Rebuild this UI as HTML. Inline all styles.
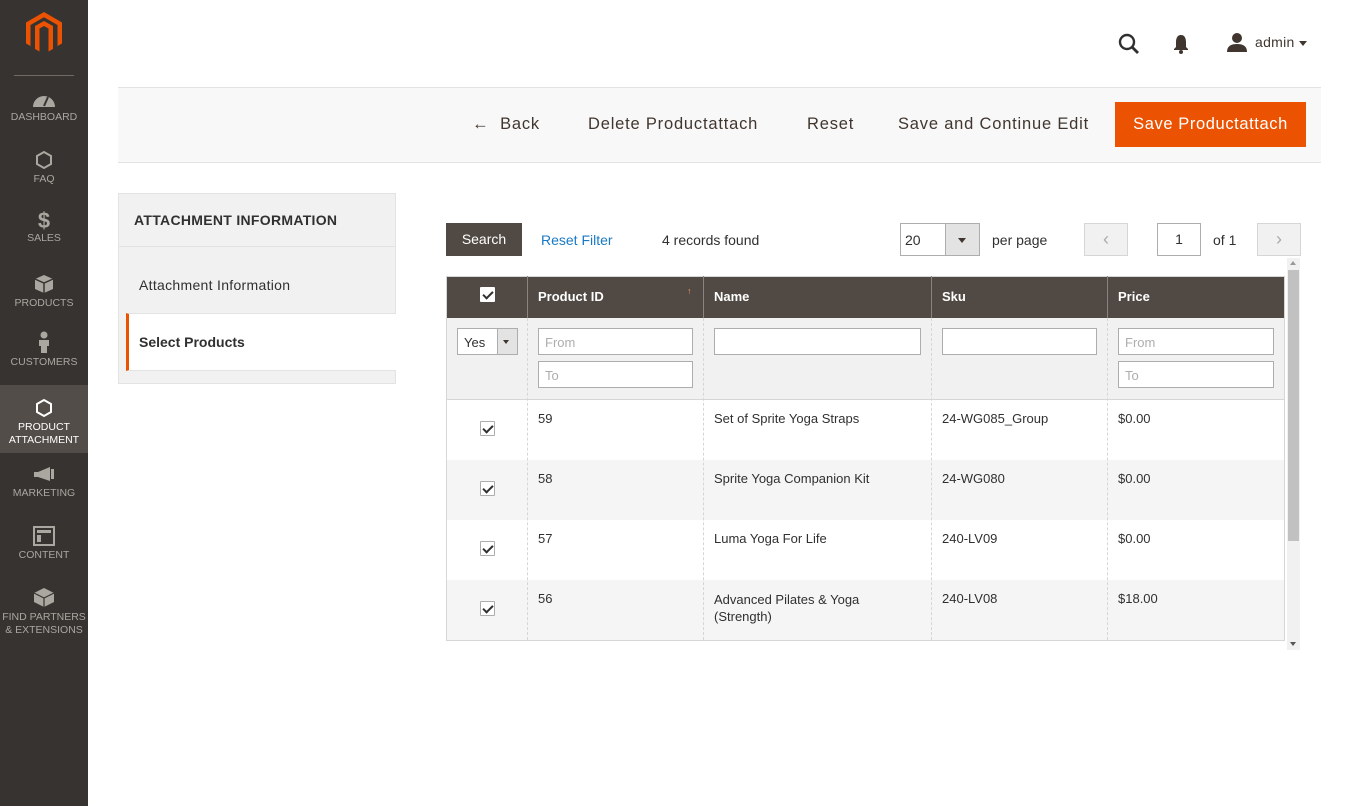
<!DOCTYPE html>
<html><head><meta charset="utf-8"><style>
*{box-sizing:border-box;margin:0;padding:0}
body{width:1350px;height:806px;position:relative;background:#fff;font-family:"Liberation Sans",sans-serif;color:#303030;overflow:hidden}
.a{position:absolute}
#sb{left:0;top:0;width:88px;height:806px;background:#373330}
.nav{position:absolute;left:0;width:88px;text-align:center;color:#aaa6a0;font-size:10.5px;line-height:13px}
.nav svg{display:block;margin:0 auto 3px}
.t{font-size:14px}
.btn{position:absolute;font-size:16.5px;color:#41362f;top:115px;letter-spacing:0.8px}
.cell{position:absolute;font-size:13px}
.inp{position:absolute;background:#fff;border:1px solid #adadad;height:27px;font-size:13px;color:#adadad;padding:6px 0 0 6px}
.vl{position:absolute;width:0;border-left:1px dashed #d6d6d6}
.cb{position:absolute;width:15px;height:15px;border:1px solid #adadad;background:#fff;border-radius:1px}
.cb:after{content:"";position:absolute;left:4px;top:1px;width:4px;height:8px;border:solid #303030;border-width:0 2px 2px 0;transform:rotate(45deg)}
</style></head><body>
<div id="sb" class="a">
<svg class="a" style="left:26px;top:12px" width="36" height="42" viewBox="0 0 36 42"><path d="M18 0L36 10.5V31.5L31.5 34V13L18 5.3 4.5 13V34L0 31.5V10.5Z" fill="#eb5202"/><path d="M18 9L27 14V37L22.5 39.5V16.5L18 14 13.5 16.5V39.5L9 37V14Z" fill="#eb5202"/></svg>
<div class="a" style="left:14px;top:75px;width:60px;height:1px;background:#736963"></div>
<div class="nav" style="top:92px"><svg width="24" height="16" viewBox="0 0 24 16"><path d="M1 15A11 11 0 0 1 23 15Z" fill="#aaa6a0"/><path d="M12 14L16 5" stroke="#373330" stroke-width="2"/></svg>DASHBOARD</div>
<div class="nav" style="top:150px"><svg width="20" height="20" viewBox="0 0 20 20"><path d="M10 2L17 6V14L10 18 3 14V6Z" fill="none" stroke="#aaa6a0" stroke-width="2"/></svg>FAQ</div>
<div class="nav" style="top:210px"><div style="font-size:22px;font-weight:bold;line-height:22px;color:#aaa6a0">$</div>SALES</div>
<div class="nav" style="top:274px"><svg width="22" height="20" viewBox="0 0 22 20"><path d="M2 5L11 1 20 5V15L11 19 2 15Z" fill="#aaa6a0"/><path d="M2 5L11 9 20 5M11 9V19" stroke="#373330" stroke-width="1.5" fill="none"/></svg>PRODUCTS</div>
<div class="nav" style="top:331px"><svg width="14" height="22" viewBox="0 0 14 22"><circle cx="7" cy="4" r="3.5" fill="#aaa6a0"/><path d="M2 9H12V15H10V22H4V15H2Z" fill="#aaa6a0"/></svg>CUSTOMERS</div>
<div class="a" style="left:0;top:385px;width:88px;height:68px;background:#524d49"></div>
<div class="nav" style="top:398px;color:#fff"><svg width="20" height="20" viewBox="0 0 20 20"><path d="M10 2L17 6V14L10 18 3 14V6Z" fill="none" stroke="#fff" stroke-width="2"/></svg>PRODUCT<br>ATTACHMENT</div>
<div class="nav" style="top:466px"><svg width="24" height="18" viewBox="0 0 24 18"><path d="M2 6H6L18 1V15L6 11H2Z" fill="#aaa6a0"/><rect x="19" y="3" width="3" height="10" fill="#aaa6a0"/></svg>MARKETING</div>
<div class="nav" style="top:526px"><svg width="22" height="20" viewBox="0 0 22 20"><rect x="1" y="1" width="20" height="18" fill="none" stroke="#aaa6a0" stroke-width="2"/><rect x="4" y="4" width="14" height="3" fill="#aaa6a0"/><rect x="4" y="9" width="4" height="7" fill="#aaa6a0"/></svg>CONTENT</div>
<div class="nav" style="top:586px"><svg width="24" height="22" viewBox="0 0 24 22"><path d="M2 7L12 2 22 7V16L12 21 2 16Z" fill="#aaa6a0"/><path d="M2 7L12 12 22 7M12 12V21" stroke="#373330" stroke-width="1.2" fill="none"/></svg>FIND PARTNERS<br>&amp; EXTENSIONS</div>
</div>

<svg class="a" style="left:1118px;top:33px" width="22" height="22" viewBox="0 0 22 22"><circle cx="9" cy="9" r="7" fill="none" stroke="#303030" stroke-width="2.4"/><path d="M14 14L20 20" stroke="#303030" stroke-width="2.8"/></svg>
<svg class="a" style="left:1173px;top:34px" width="16" height="20" viewBox="0 0 16 20"><path d="M8 1C4 1 3 5 3 8V13L1 15V16H15V15L13 13V8C13 5 12 1 8 1Z" fill="#41362f"/><circle cx="8" cy="18" r="2" fill="#41362f"/></svg>
<svg class="a" style="left:1227px;top:32px" width="20" height="20" viewBox="0 0 20 20"><circle cx="10" cy="6" r="5" fill="#41362f"/><path d="M0 20C0 14 4 12 10 12S20 14 20 20Z" fill="#41362f"/></svg>
<div class="a t" style="left:1255px;top:34px;color:#41362f;letter-spacing:0.3px">admin</div>
<div class="a" style="left:1299px;top:41px;border:4.5px solid transparent;border-top:5px solid #41362f;border-bottom:0"></div>

<div class="a" style="left:118px;top:87px;width:1203px;height:76px;background:#f8f8f8;border-top:1px solid #e3e3e3;border-bottom:1px solid #e3e3e3"></div>
<div class="btn" style="left:472px">&#8592;&nbsp;&nbsp;Back</div>
<div class="btn" style="left:588px">Delete Productattach</div>
<div class="btn" style="left:807px">Reset</div>
<div class="btn" style="left:898px">Save and Continue Edit</div>
<div class="a" style="left:1115px;top:102px;width:191px;height:45px;background:#eb5202;color:#fff;font-size:16.5px;text-align:center;line-height:45px;letter-spacing:0.6px">Save Productattach</div>

<div class="a" style="left:118px;top:193px;width:278px;height:191px;background:#f1f1f1;border:1px solid #e3e3e3"></div>
<div class="a" style="left:119px;top:246px;width:277px;height:1px;background:#e3e3e3"></div>
<div class="a" style="left:134px;top:212px;font-size:14px;font-weight:bold;color:#303030;letter-spacing:0.3px">ATTACHMENT INFORMATION</div>
<div class="a t" style="left:139px;top:277px;letter-spacing:0.3px">Attachment Information</div>
<div class="a" style="left:126px;top:313px;width:270px;height:58px;background:#fff;border-left:3px solid #eb5202;border-top:1px solid #e3e3e3;border-bottom:1px solid #e3e3e3"></div>
<div class="a t" style="left:139px;top:334px;font-weight:bold">Select Products</div>

<div class="a" style="left:446px;top:223px;width:76px;height:33px;background:#514943;color:#fff;font-size:14px;text-align:center;line-height:33px">Search</div>
<div class="a t" style="left:541px;top:232px;color:#1979c3">Reset Filter</div>
<div class="a t" style="left:662px;top:232px">4 records found</div>
<div class="a" style="left:900px;top:223px;width:80px;height:33px;border:1px solid #adadad;background:#fff"></div>
<div class="a" style="left:945px;top:224px;width:34px;height:31px;background:#e3e3e3;border-left:1px solid #adadad"></div>
<div class="a" style="left:958px;top:238px;border:4px solid transparent;border-top:5px solid #41362f;border-bottom:0"></div>
<div class="a t" style="left:905px;top:232px">20</div>
<div class="a t" style="left:992px;top:232px">per page</div>
<div class="a" style="left:1084px;top:223px;width:44px;height:33px;background:#f1f1f1;border:1px solid #d6d6d6;color:#aaa;text-align:center;line-height:30px;font-size:18px">&#8249;</div>
<div class="a" style="left:1157px;top:223px;width:44px;height:33px;border:1px solid #adadad;text-align:center;line-height:31px;font-size:14px">1</div>
<div class="a t" style="left:1213px;top:232px">of 1</div>
<div class="a" style="left:1257px;top:223px;width:44px;height:33px;background:#f1f1f1;border:1px solid #d6d6d6;color:#aaa;text-align:center;line-height:30px;font-size:18px">&#8250;</div>

<div class="a" style="left:446px;top:276px;width:839px;height:42px;background:#514943"></div>
<div class="a" style="left:446px;top:318px;width:839px;height:82px;background:#f1f1f1;border-bottom:1px solid #d6d6d6"></div>
<div class="a" style="left:446px;top:460px;width:839px;height:60px;background:#f5f5f5"></div>
<div class="a" style="left:446px;top:580px;width:839px;height:60px;background:#f5f5f5"></div>
<div class="a" style="left:446px;top:276px;width:839px;height:365px;border:1px solid #d6d6d6"></div>
<div class="a" style="left:527px;top:276px;width:1px;height:42px;background:#8a837f"></div>
<div class="a" style="left:703px;top:276px;width:1px;height:42px;background:#8a837f"></div>
<div class="a" style="left:931px;top:276px;width:1px;height:42px;background:#8a837f"></div>
<div class="a" style="left:1107px;top:276px;width:1px;height:42px;background:#8a837f"></div>
<div class="vl" style="left:527px;top:318px;height:322px"></div>
<div class="vl" style="left:703px;top:318px;height:322px"></div>
<div class="vl" style="left:931px;top:318px;height:322px"></div>
<div class="vl" style="left:1107px;top:318px;height:322px"></div>
<div class="cb" style="left:480px;top:287px;border-color:#fff"></div>
<div class="cell" style="left:538px;top:289px;color:#fff;font-weight:bold">Product ID</div>
<div class="cell" style="left:687px;top:286px;color:#eb9a66;font-size:9px">&#8593;</div>
<div class="cell" style="left:714px;top:289px;color:#fff;font-weight:bold">Name</div>
<div class="cell" style="left:942px;top:289px;color:#fff;font-weight:bold">Sku</div>
<div class="cell" style="left:1118px;top:289px;color:#fff;font-weight:bold">Price</div>

<div class="inp" style="left:457px;top:328px;width:61px;color:#303030">Yes</div>
<div class="a" style="left:497px;top:329px;width:20px;height:25px;background:#e3e3e3;border-left:1px solid #adadad"></div>
<div class="a" style="left:503px;top:340px;border:3.5px solid transparent;border-top:4px solid #41362f;border-bottom:0"></div>
<div class="inp" style="left:538px;top:328px;width:155px">From</div>
<div class="inp" style="left:538px;top:361px;width:155px">To</div>
<div class="inp" style="left:714px;top:328px;width:207px"></div>
<div class="inp" style="left:942px;top:328px;width:155px"></div>
<div class="inp" style="left:1118px;top:328px;width:156px">From</div>
<div class="inp" style="left:1118px;top:361px;width:156px">To</div>

<div class="cb" style="left:480px;top:421px"></div>
<div class="cell" style="left:538px;top:411px">59</div><div class="cell" style="left:714px;top:411px">Set of Sprite Yoga Straps</div><div class="cell" style="left:942px;top:411px">24-WG085_Group</div><div class="cell" style="left:1118px;top:411px">$0.00</div>
<div class="cb" style="left:480px;top:481px"></div>
<div class="cell" style="left:538px;top:471px">58</div><div class="cell" style="left:714px;top:471px">Sprite Yoga Companion Kit</div><div class="cell" style="left:942px;top:471px">24-WG080</div><div class="cell" style="left:1118px;top:471px">$0.00</div>
<div class="cb" style="left:480px;top:541px"></div>
<div class="cell" style="left:538px;top:531px">57</div><div class="cell" style="left:714px;top:531px">Luma Yoga For Life</div><div class="cell" style="left:942px;top:531px">240-LV09</div><div class="cell" style="left:1118px;top:531px">$0.00</div>
<div class="cb" style="left:480px;top:601px"></div>
<div class="cell" style="left:538px;top:591px">56</div><div class="cell" style="left:714px;top:591px;line-height:17px">Advanced Pilates &amp; Yoga<br>(Strength)</div><div class="cell" style="left:942px;top:591px">240-LV08</div><div class="cell" style="left:1118px;top:591px">$18.00</div>

<div class="a" style="left:1287px;top:258px;width:13px;height:392px;background:#f1f1f1"></div>
<div class="a" style="left:1288px;top:270px;width:11px;height:271px;background:#c1c1c1"></div>
<div class="a" style="left:1290px;top:261px;border:3px solid transparent;border-bottom:4px solid #999;border-top:0"></div>
<div class="a" style="left:1290px;top:642px;border:3px solid transparent;border-top:4px solid #555;border-bottom:0"></div>
</body></html>
